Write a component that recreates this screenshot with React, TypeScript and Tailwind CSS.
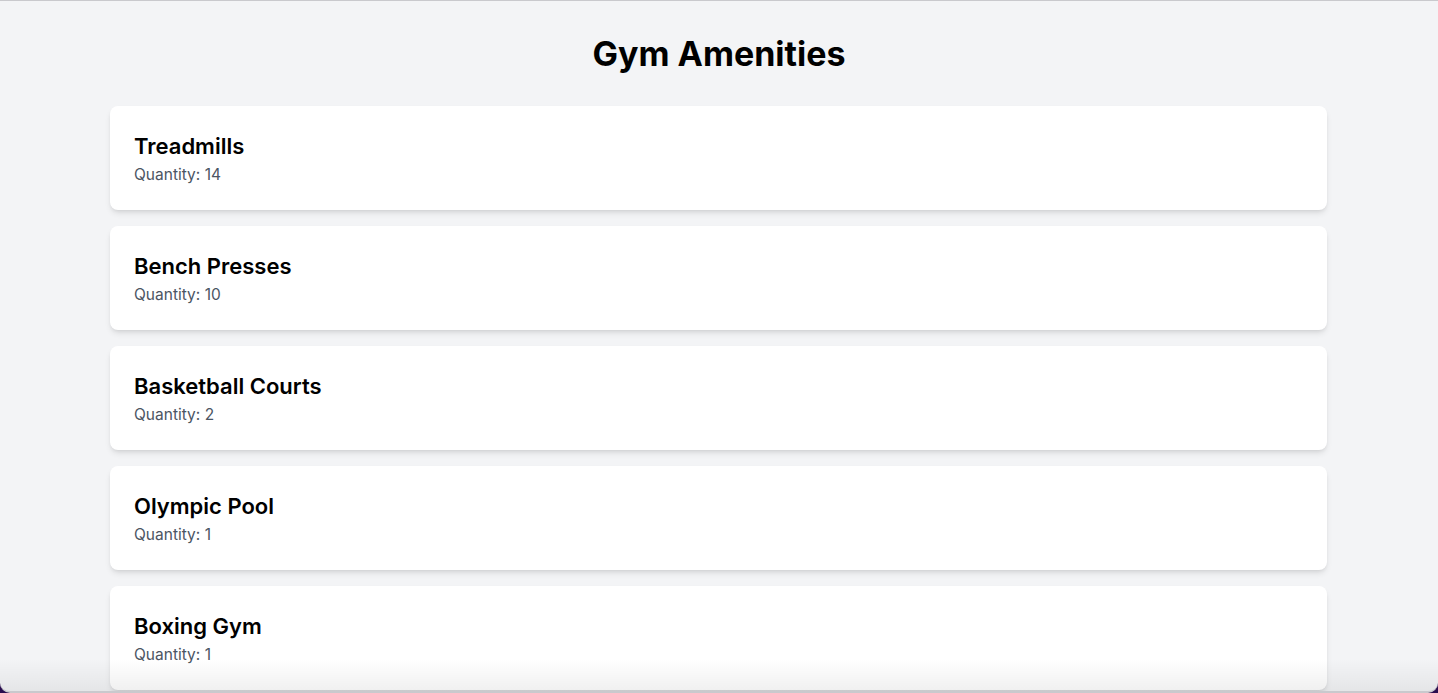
import React from 'react'

const amenities = [
  { name: 'Treadmills', quantity: 14 },
  { name: 'Bench Presses', quantity: 10 },
  { name: 'Basketball Courts', quantity: 2 },
  { name: 'Olympic Pool', quantity: 1 },
  { name: 'Boxing Gym', quantity: 1 },
]

export default function App() {
  return (
    <div className="h-[693px] w-full bg-[#2a0d4f]" style={{ fontFamily: 'Inter, "Noto Sans", sans-serif' }}>
      <div className="relative h-full overflow-hidden rounded-b-[10px] border-t border-b-2 border-[#c9c9cd] bg-[#f3f4f6]">
        <div className="container mx-auto px-8 pt-[33px]">
          <h1 className="mb-8 text-center text-[34px] leading-10 font-bold text-black">Gym Amenities</h1>

          <div className="-ml-px space-y-4">
            {amenities.map((item) => (
              <div key={item.name} className="rounded-lg bg-white p-6 shadow-md">
                <h2 className="text-[22px] leading-8 font-semibold text-black">{item.name}</h2>
                <p className="pt-px text-[15.5px] leading-[23px] text-[#4b5563]">Quantity: {item.quantity}</p>
              </div>
            ))}
          </div>
        </div>

        {/* window bottom fade */}
        <div className="pointer-events-none absolute bottom-0 left-0 right-0 h-8 bg-gradient-to-b from-transparent to-black/[0.06]" />
      </div>
    </div>
  )
}
